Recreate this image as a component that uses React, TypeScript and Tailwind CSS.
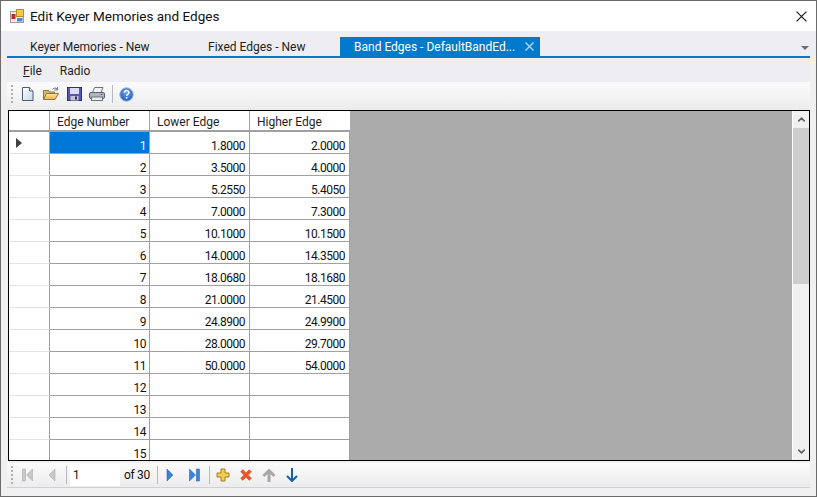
import { ChevronUp, ChevronDown } from 'lucide-react';

const font = "font-['Roboto',sans-serif]";

const rows = [
  ['1', '1.8000', '2.0000'],
  ['2', '3.5000', '4.0000'],
  ['3', '5.2550', '5.4050'],
  ['4', '7.0000', '7.3000'],
  ['5', '10.1000', '10.1500'],
  ['6', '14.0000', '14.3500'],
  ['7', '18.0680', '18.1680'],
  ['8', '21.0000', '21.4500'],
  ['9', '24.8900', '24.9900'],
  ['10', '28.0000', '29.7000'],
  ['11', '50.0000', '54.0000'],
  ['12', '', ''],
  ['13', '', ''],
  ['14', '', ''],
  ['15', '', ''],
];

function Grip() {
  return (
    <div className="flex flex-col gap-[2px] w-[3px] shrink-0">
      {[0, 1, 2, 3, 4].map(i => (
        <div key={i} className="w-[2px] h-[2px] bg-[#b0b0b0]" />
      ))}
    </div>
  );
}

function Sep() {
  return <div className="w-px h-[18px] bg-[#b8b8c0] shrink-0" />;
}

function CloseGlyph({ size, color, width }: { size: number; color: string; width: number }) {
  return (
    <svg width={size} height={size} viewBox="0 0 10 10" className="shrink-0">
      <path d="M0.500 0.500l9 9M9.500 0.500l-9 9" fill="none" stroke={color} strokeWidth={width} />
    </svg>
  );
}

function AppIcon() {
  return (
    <svg width="14" height="14" viewBox="0 0 14 14" className="shrink-0">
      <rect x="0.500" y="2.500" width="13" height="11" fill="#f0f0f0" stroke="#9c9c9c" />
      <rect x="1.500" y="5" width="4" height="5" fill="#c8282c" />
      <rect x="1.500" y="10" width="4" height="2" fill="#e0e0e0" />
      <rect x="6.500" y="0.500" width="7" height="7" fill="#f8c840" stroke="#b88c2a" />
      <rect x="7" y="9" width="5.500" height="3.500" fill="#4f86dc" />
    </svg>
  );
}

function NewIcon() {
  return (
    <svg width="16" height="16" viewBox="0 0 16 16">
      <defs>
        <linearGradient id="pg" x1="0" y1="0" x2="1" y2="1">
          <stop offset="0" stopColor="#ffffff" />
          <stop offset="1" stopColor="#c8d6ea" />
        </linearGradient>
      </defs>
      <path d="M2.500 1.500h7l3.500 3.500v9.500h-10.500z" fill="url(#pg)" stroke="#4c5c74" />
      <path d="M9.500 1.500v3.500h3.500" fill="#ffffff" stroke="#4c5c74" />
    </svg>
  );
}

function OpenIcon() {
  return (
    <svg width="18" height="16" viewBox="0 0 18 16">
      <defs>
        <linearGradient id="fg" x1="0" y1="0" x2="0" y2="1">
          <stop offset="0" stopColor="#fdeaa8" />
          <stop offset="1" stopColor="#eeb23c" />
        </linearGradient>
      </defs>
      <path d="M1.500 4.500h5l1 1.500h5v7.500h-11z" fill="#d8b870" stroke="#94743a" />
      <path d="M1.500 13.500l3-6h12l-3.500 6z" fill="url(#fg)" stroke="#94743a" />
      <path d="M10.500 3.500c1.500-1.800 3.300-1.800 4.500-.5" fill="none" stroke="#5a7a9a" />
      <path d="M15.500 1v3h-3" fill="none" stroke="#5a7a9a" />
    </svg>
  );
}

function SaveIcon() {
  return (
    <svg width="15" height="16" viewBox="0 0 15 16">
      <rect x="0.500" y="1.500" width="14" height="13" fill="#5656b4" stroke="#303078" />
      <rect x="3" y="2" width="9" height="6" fill="#dcdcf4" />
      <rect x="3.500" y="10" width="8" height="4.500" fill="#c4c4cc" />
      <rect x="8" y="10.500" width="2" height="3" fill="#303078" />
    </svg>
  );
}

function PrintIcon() {
  return (
    <svg width="16" height="16" viewBox="0 0 16 16">
      <path d="M5.500 1.500h8.500l-2 5h-8.500z" fill="#f4f4f4" stroke="#6c7480" />
      <rect x="0.500" y="6.500" width="15" height="6" rx="1.500" fill="#aeb6c2" stroke="#56606c" />
      <rect x="2.500" y="11" width="11" height="3.500" fill="#eeeeee" stroke="#6c7480" />
      <rect x="11.500" y="8" width="2" height="1" fill="#c04030" />
    </svg>
  );
}

function HelpIcon() {
  return (
    <svg width="15" height="15" viewBox="0 0 15 15">
      <defs>
        <radialGradient id="hg" cx="0.500" cy="0.350" r="0.700">
          <stop offset="0" stopColor="#6aa0ec" />
          <stop offset="1" stopColor="#1f58b8" />
        </radialGradient>
      </defs>
      <circle cx="7.500" cy="7.500" r="6.700" fill="url(#hg)" stroke="#9ab4dc" />
      <path d="M5.300 5.800c0-3 4.600-3 4.600-.2 0 1.800-2.300 1.800-2.300 3.500" fill="none" stroke="#fff" strokeWidth="1.500" />
      <rect x="6.800" y="10" width="1.600" height="1.600" fill="#fff" />
    </svg>
  );
}

function NavFirst() {
  return (
    <svg width="12" height="14" viewBox="0 0 12 14">
      <rect x="0.500" y="1" width="3" height="12" fill="#c8c8c8" stroke="#a4a4a4" strokeWidth="0.500" />
      <path d="M10.500 1v12L4.500 7z" fill="#c8c8c8" stroke="#a4a4a4" strokeWidth="0.500" />
    </svg>
  );
}

function NavPrev() {
  return (
    <svg width="8" height="14" viewBox="0 0 8 14">
      <path d="M7 1v12L1 7z" fill="#c8c8c8" stroke="#a4a4a4" strokeWidth="0.500" />
    </svg>
  );
}

function NavNext() {
  return (
    <svg width="8" height="14" viewBox="0 0 8 14">
      <path d="M1 1v12l6-6z" fill="#3b82d8" stroke="#1f5fa8" strokeWidth="0.500" />
    </svg>
  );
}

function NavLast() {
  return (
    <svg width="12" height="14" viewBox="0 0 12 14">
      <path d="M0.500 1v12l6-6z" fill="#3b82d8" stroke="#1f5fa8" strokeWidth="0.500" />
      <rect x="7.500" y="1" width="3" height="12" fill="#3b82d8" stroke="#1f5fa8" strokeWidth="0.500" />
    </svg>
  );
}

function AddIcon() {
  return (
    <svg width="14" height="14" viewBox="0 0 14 14">
      <path d="M5 1h4v4h4v4H9v4H5V9H1V5h4z" fill="#f6cc50" stroke="#a87c20" />
    </svg>
  );
}

function DeleteIcon() {
  return (
    <svg width="12" height="12" viewBox="0 0 12 12">
      <path d="M1.500 1.500l9 9M10.500 1.500l-9 9" fill="none" stroke="#e4572e" strokeWidth="3.400" />
    </svg>
  );
}

function UpIcon() {
  return (
    <svg width="14" height="14" viewBox="0 0 14 14">
      <path d="M7 14V3M1.500 8L7 2.500 12.500 8" fill="none" stroke="#a8a8a8" strokeWidth="3" />
    </svg>
  );
}

function DownIcon() {
  return (
    <svg width="12" height="14" viewBox="0 0 12 14">
      <path d="M6 0v12.500M1 8l5 5 5-5" fill="none" stroke="#1560a8" strokeWidth="2" />
    </svg>
  );
}

export default function App() {
  return (
    <div className={`w-[817px] h-[497px] overflow-hidden flex flex-col bg-[#f0f0f0] border border-[#6b6b6b] text-[12px] leading-[16px] text-black ${font}`}>
      {/* Title bar */}
      <div className="h-[30px] shrink-0 bg-white flex items-center pl-[9px] pr-[9px]">
        <AppIcon />
        <span className="ml-[6px] text-[13.500px] text-[#111]">Edit Keyer Memories and Edges</span>
        <div className="ml-auto"><CloseGlyph size={11} color="#111" width={1} /></div>
      </div>

      {/* Document area */}
      <div className="flex-1 min-h-0 flex flex-col pl-[6px] pr-[6px] pb-[8px]">
        {/* Tabs */}
        <div className="h-[25px] shrink-0 -mx-[6px] pl-[6px] pr-[6px] bg-[#eeeef2] flex flex-col">
          <div className="h-[19px] mt-[6px] relative flex items-center whitespace-nowrap">
            <span className="ml-[23px] w-[178px] text-[#1e1e1e]">Keyer Memories - New</span>
            <span className="w-[132px] text-[#1e1e1e]">Fixed Edges - New</span>
            <div className="w-[200px] h-[19px] bg-[#007acc] text-white flex items-center pl-[14px]">
              <span className="w-[171px]">Band Edges - DefaultBandEd...</span>
              <CloseGlyph size={9} color="#a8d4f0" width={1.600} />
            </div>
            <div className="absolute right-[1px] top-[9px] w-0 h-0 border-x-[4px] border-x-transparent border-t-[4px] border-t-[#6d6d70]" />
          </div>
        </div>
        <div className="h-[2px] shrink-0 bg-[#007acc]" />

        <div className="flex-1 min-h-0 flex flex-col">
          {/* Menu */}
          <div className="h-[24px] shrink-0 bg-[#eeeef2] flex items-center pl-[16px] pt-[2px] gap-[18px] text-[#1e1e1e]">
            <span><span className="underline">F</span>ile</span>
            <span>Radio</span>
          </div>

          {/* Toolbar */}
          <div className="h-[28px] shrink-0 bg-gradient-to-b from-[#fbfbfb] to-[#ececec] flex items-center pl-[4px] pb-[4px]">
            <Grip />
            <div className="ml-[6px] flex items-center">
              <NewIcon />
              <div className="ml-[6px]"><OpenIcon /></div>
              <div className="ml-[7px]"><SaveIcon /></div>
              <div className="ml-[7px]"><PrintIcon /></div>
            </div>
            <div className="ml-[7px]"><Sep /></div>
            <div className="ml-[6px]"><HelpIcon /></div>
          </div>

          {/* Grid */}
          <div className="flex-1 min-h-0 flex border border-black bg-[#ababab] ml-[1px] overflow-hidden">
            <div className="w-[341px] shrink-0 bg-white overflow-hidden">
              <div className="h-[19px] flex border-b-[2px] border-[#a0a0a0] box-content">
                <div className="w-[41px] border-r border-[#a0a0a0]" />
                <div className="w-[100px] border-r border-[#a0a0a0] pl-[7px] pt-[3px] flex items-center text-[#1e1e1e]">Edge Number</div>
                <div className="w-[100px] border-r border-[#a0a0a0] pl-[7px] pt-[3px] flex items-center text-[#1e1e1e]">Lower Edge</div>
                <div className="w-[100px] pl-[7px] pt-[3px] flex items-center text-[#1e1e1e]">Higher Edge</div>
              </div>
              {rows.map((r, i) => (
                <div key={r[0]} className="h-[22px] flex">
                  <div className="w-[41px] border-r border-b border-r-[#a0a0a0] border-b-[#e4e4e4] flex items-center pl-[7px] pt-[1px]">
                    {i === 0 && (
                      <div className="w-0 h-0 border-y-[5px] border-y-transparent border-l-[6px] border-l-[#404040]" />
                    )}
                  </div>
                  <div className={`w-[100px] border-r border-b border-[#a0a0a0] flex items-end justify-end pr-[3px] leading-[14px] tracking-[-0.5px] ${i === 0 ? 'bg-[#0078d7] text-white' : 'text-[#111]'}`}>{r[0]}</div>
                  <div className="w-[100px] border-r border-b border-[#a0a0a0] flex items-end justify-end pr-[4px] leading-[14px] tracking-[-0.5px] text-[#111]">{r[1]}</div>
                  <div className="w-[100px] border-r border-b border-[#a0a0a0] flex items-end justify-end pr-[4px] leading-[14px] tracking-[-0.5px] text-[#111]">{r[2]}</div>
                </div>
              ))}
            </div>
            <div className="flex-1" />
            {/* Scrollbar */}
            <div className="w-[17px] shrink-0 bg-[#f0f0f0] border-l border-white flex flex-col">
              <div className="h-[17px] flex items-center justify-center">
                <ChevronUp className="w-[11px] h-[11px] text-[#606060]" strokeWidth={3.500} />
              </div>
              <div className="h-[156px] bg-[#cdcdcd]" />
              <div className="flex-1" />
              <div className="h-[17px] flex items-center justify-center">
                <ChevronDown className="w-[11px] h-[11px] text-[#606060]" strokeWidth={3.500} />
              </div>
            </div>
          </div>

          {/* Navigator */}
          <div className="h-[25px] mt-[2px] shrink-0 bg-gradient-to-b from-[#fbfbfb] to-[#ececec] flex items-center pl-[4px] border-b border-[#d0d0d8]">
            <Grip />
            <div className="ml-[8px]"><NavFirst /></div>
            <div className="ml-[14px]"><NavPrev /></div>
            <div className="ml-[10px]"><Sep /></div>
            <div className="ml-[3px] w-[50px] h-[22px] bg-white flex items-center pl-[3px] text-[#111]">1</div>
            <span className="ml-[4px] w-[27px] text-[#111] whitespace-nowrap tracking-[-0.3px]">of 30</span>
            <div className="ml-[6px]"><Sep /></div>
            <div className="ml-[8px]"><NavNext /></div>
            <div className="ml-[15px]"><NavLast /></div>
            <div className="ml-[8px]"><Sep /></div>
            <div className="ml-[6px]"><AddIcon /></div>
            <div className="ml-[10px]"><DeleteIcon /></div>
            <div className="ml-[10px]"><UpIcon /></div>
            <div className="ml-[10px]"><DownIcon /></div>
          </div>
        </div>
      </div>
    </div>
  );
}
